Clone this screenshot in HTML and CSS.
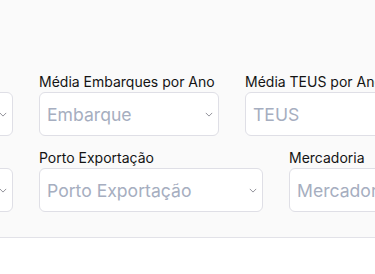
FILE: index.html
```html
<!DOCTYPE html>
<html lang="pt-BR">
<head>
  <meta charset="UTF-8">
  <meta name="viewport" content="width=device-width, initial-scale=1.0">
  <title>Filtros</title>
  <link rel="stylesheet" href="styles.css">
</head>
<body>

<section class="filters">
  <!-- Linha 1 -->
  <div class="filter-row">
    <div class="field field-first">
      <label>&nbsp;</label>
      <div class="select">
        <svg class="chevron" viewBox="0 0 10 6"><path d="M1 1l4 4 4-4"/></svg>
      </div>
    </div>
    <div class="field w-180">
      <label>Média Embarques por Ano</label>
      <div class="select">
        <span class="placeholder">Embarque</span>
        <svg class="chevron" viewBox="0 0 10 6"><path d="M1 1l4 4 4-4"/></svg>
      </div>
    </div>
    <div class="field w-180">
      <label>Média TEUS por Ano</label>
      <div class="select">
        <span class="placeholder">TEUS</span>
        <svg class="chevron" viewBox="0 0 10 6"><path d="M1 1l4 4 4-4"/></svg>
      </div>
    </div>
  </div>

  <!-- Linha 2 -->
  <div class="filter-row">
    <div class="field field-first">
      <label>&nbsp;</label>
      <div class="select">
        <svg class="chevron" viewBox="0 0 10 6"><path d="M1 1l4 4 4-4"/></svg>
      </div>
    </div>
    <div class="field w-224">
      <label>Porto Exportação</label>
      <div class="select">
        <span class="placeholder">Porto Exportação</span>
        <svg class="chevron" viewBox="0 0 10 6"><path d="M1 1l4 4 4-4"/></svg>
      </div>
    </div>
    <div class="field w-224">
      <label>Mercadoria</label>
      <div class="select">
        <span class="placeholder">Mercadoria</span>
        <svg class="chevron" viewBox="0 0 10 6"><path d="M1 1l4 4 4-4"/></svg>
      </div>
    </div>
  </div>
</section>

</body>
</html>
```

FILE: styles.css
```css
body {
  font-family: Inter, "Noto Sans", sans-serif;
  background-color: #fff;
  margin: 0;
  padding: 0;
  overflow: hidden;
}
.filters {
  background-color: #fafafa;
  border-bottom: 1px solid #e2e2e8;
  padding: 72px 0 25px 0;
  display: flex;
  flex-direction: column;
  gap: 12px;
  overflow: hidden;
}
.filter-row {
  display: flex;
  gap: 26px;
  margin-left: -187px;
}
.field {
  flex-shrink: 0;
}
.field-first {
  width: 200px;
}
.w-180 {
  width: 180px;
}
.w-224 {
  width: 224px;
}
.field label {
  display: block;
  font-size: 14px;
  line-height: 20px;
  color: #141414;
}
.select {
  position: relative;
  display: flex;
  align-items: center;
  box-sizing: border-box;
  height: 44px;
  padding: 0 7px;
  background: #fff;
  border: 1px solid #dfdfe6;
  border-radius: 6px;
}
.placeholder {
  font-size: 17.6px;
  color: #a6aec0;
  white-space: nowrap;
}
.chevron {
  position: absolute;
  right: 5px;
  top: 19px;
  width: 8px;
  height: 5px;
  fill: none;
  stroke: #8e8e96;
  stroke-width: 1.2;
}
```
